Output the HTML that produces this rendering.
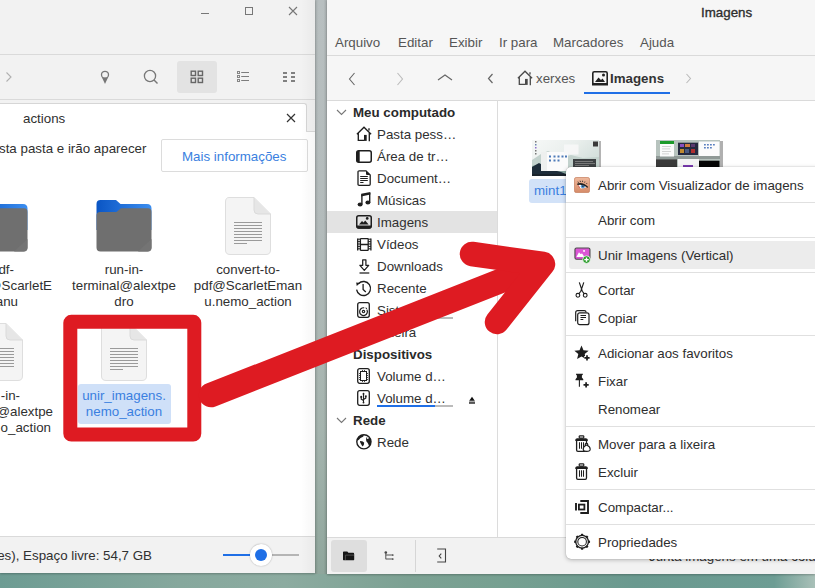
<!DOCTYPE html>
<html><head><meta charset="utf-8">
<style>
*{margin:0;padding:0;box-sizing:border-box}
html,body{width:815px;height:588px;overflow:hidden}
body{position:relative;font-family:"Liberation Sans",sans-serif;font-size:13.33px;color:#303030;
background:linear-gradient(90deg,#6d9c93 0%,#86a89d 22%,#8caba0 35%,#7ca193 50%,#76a091 62%,#6a998f 78%,#6d9d94 95%,#a9c0b8 100%)}
.a{position:absolute}
.t{position:absolute;white-space:nowrap;line-height:16px;padding-top:1px}
#lw{left:0;top:0;width:315px;height:573px;background:#fff;overflow:hidden;box-shadow:0 1px 2px rgba(0,0,0,.25)}
#rw{left:327px;top:0;width:488px;height:574px;background:#fff;overflow:hidden;box-shadow:0 1px 2px rgba(0,0,0,.25)}
#gap{left:315px;top:0;width:12px;height:574px;background:linear-gradient(90deg,rgba(0,0,0,.1),rgba(0,0,0,0) 30%,rgba(0,0,0,0) 70%,rgba(0,0,0,.12)),linear-gradient(180deg,#b8bfc0 0%,#b3bbbb 40%,#a5b4ae 75%,#8fa69c 100%)}
.hdr{background:#f2f2f2}
.line{background:#dadada}
.ctr{text-align:center}
.sel{color:#3a7fe0}
.menu{left:566px;top:167px;width:260px;height:392px;background:#fff;border-radius:5px;
box-shadow:0 1px 4px rgba(0,0,0,.25),0 0 1px rgba(0,0,0,.35)}
.mi{position:absolute;left:32px;white-space:nowrap;line-height:16px;padding-top:1px;color:#2e2e2e}
.sep{position:absolute;left:0;width:260px;height:1px;background:#e0e0e0}
</style></head><body>
<div id="gap" class="a"></div>

<!-- LEFT WINDOW -->
<div id="lw" class="a">
  <div class="a hdr" style="left:0;top:0;width:315px;height:131px"></div>
  <div class="a line" style="left:0;top:54px;width:315px;height:1px"></div>
  <div class="a line" style="left:0;top:99px;width:315px;height:1px"></div>
  <!-- window buttons -->
  <div class="a" style="left:201px;top:13px;width:8px;height:1px;background:#777"></div>
  <div class="a" style="left:245px;top:7px;width:8px;height:8px;border:1px solid #777"></div>
  <svg class="a" style="left:288px;top:6px" width="10" height="10" viewBox="0 0 10 10"><path d="M1 1L9 9M9 1L1 9" stroke="#777" stroke-width="1.1"/></svg>
  <!-- toolbar -->
  <svg class="a" style="left:5px;top:71px" width="8" height="12" viewBox="0 0 8 12"><path d="M1.5 1.5L6 6L1.5 10.5" stroke="#b0b0b0" fill="none" stroke-width="1.1"/></svg>
  <svg class="a" style="left:100px;top:70px" width="10" height="15" viewBox="0 0 10 15"><circle cx="5" cy="4.8" r="3.5" fill="none" stroke="#777" stroke-width="1.3"/><path d="M2 7.5L5 14L8 7.5Z" fill="#777"/></svg>
  <svg class="a" style="left:143px;top:69px" width="16" height="16" viewBox="0 0 16 16"><circle cx="7" cy="7" r="5.6" fill="none" stroke="#777" stroke-width="1.3"/><path d="M11 11L14.5 14.5" stroke="#777" stroke-width="1.4"/></svg>
  <div class="a" style="left:177px;top:61px;width:40px;height:32px;background:#e3e3e3;border-radius:3px"></div>
  <svg class="a" style="left:190px;top:70px" width="14" height="14" viewBox="0 0 14 14"><g fill="none" stroke="#666" stroke-width="1.4"><rect x="1.2" y="1.2" width="4.3" height="4.3"/><rect x="8.2" y="1.2" width="4.3" height="4.3"/><rect x="1.2" y="8.2" width="4.3" height="4.3"/><rect x="8.2" y="8.2" width="4.3" height="4.3"/></g></svg>
  <svg class="a" style="left:237px;top:71px" width="13" height="12" viewBox="0 0 13 12"><g fill="none" stroke="#858585" stroke-width="1"><rect x="0.5" y="0.5" width="2" height="2"/><rect x="0.5" y="4.5" width="2" height="2"/><rect x="0.5" y="8.5" width="2" height="2"/></g><path d="M4.2 1.5H12M4.2 5.5H12M4.2 9.5H12" stroke="#7d7d7d" stroke-width="1.1"/></svg>
  <svg class="a" style="left:283px;top:72px" width="13" height="11" viewBox="0 0 13 11"><g fill="#808080"><rect x="0" y="0" width="4" height="2"/><rect x="8" y="0" width="4" height="2"/><rect x="0" y="4" width="4" height="2"/><rect x="8" y="4" width="4" height="2"/><rect x="0" y="8" width="4" height="2"/><rect x="8" y="8" width="4" height="2"/></g></svg>
  <!-- tab -->
  <div class="a" style="left:-4px;top:103px;width:311px;height:29px;background:#fff;border:1px solid #d6d6d6;border-bottom:none;border-radius:3px 3px 0 0"></div>
  <div class="a line" style="left:306px;top:131px;width:9px;height:1px"></div>
  <div class="t" style="left:23px;top:110px">actions</div>
  <svg class="a" style="left:286px;top:113px" width="10" height="10" viewBox="0 0 10 10"><path d="M1 1L9 9M9 1L1 9" stroke="#333" stroke-width="1.2"/></svg>
  <!-- info bar -->
  <div class="t" style="left:-1px;top:140px">sta pasta e irão aparecer</div>
  <div class="a" style="left:161px;top:139px;width:147px;height:33px;border:1px solid #dcdcdc;border-radius:2px;background:#fff"></div>
  <div class="t sel" style="left:182px;top:148px">Mais informações</div>

  <!-- icons row 1 -->
  <!-- folder col1 -->
  <svg class="a" style="left:-28px;top:200px" width="56" height="53" viewBox="0 0 56 53"><defs><linearGradient id="fg1" x1="0" x2="1"><stop offset="0" stop-color="#0a55c4"/><stop offset="1" stop-color="#3c8ef0"/></linearGradient></defs><path d="M0.5 4Q0.5 0 4.5 0H20L24.5 4H51Q55.5 4 55.5 8.5V30H0.5Z" fill="url(#fg1)"/><path d="M0.5 15.5Q0.5 12 4 12H20.5L25 8.3H52Q55.5 8.3 55.5 12V47.5Q55.5 51.5 51.5 51.5H4.5Q0.5 51.5 0.5 47.5Z" fill="#6f6f6f"/><path d="M55.5 39V47.5Q55.5 51.5 51.5 51.5H42Z" fill="#747474"/></svg>
  <svg class="a" style="left:96px;top:200px" width="56" height="53" viewBox="0 0 56 53"><defs><linearGradient id="fg2" x1="0" x2="1"><stop offset="0" stop-color="#0a55c4"/><stop offset="1" stop-color="#3c8ef0"/></linearGradient></defs><path d="M0.5 4Q0.5 0 4.5 0H20L24.5 4H51Q55.5 4 55.5 8.5V30H0.5Z" fill="url(#fg2)"/><path d="M0.5 15.5Q0.5 12 4 12H20.5L25 8.3H52Q55.5 8.3 55.5 12V47.5Q55.5 51.5 51.5 51.5H4.5Q0.5 51.5 0.5 47.5Z" fill="#6f6f6f"/><path d="M55.5 39V47.5Q55.5 51.5 51.5 51.5H42Z" fill="#747474"/></svg>
  <!-- file col3 -->
  <svg class="a" style="left:225px;top:197px" width="46" height="58" viewBox="0 0 46 58"><path d="M4 0.5H29L45.5 17V53Q45.5 57.5 41 57.5H5Q0.5 57.5 0.5 53V5Q0.5 0.5 4 0.5Z" fill="#f4f4f4" stroke="#dedede"/><path d="M29 0.5V13Q29 17 33 17H45.5" fill="#e6e6e6" stroke="#dadada"/><g stroke="#9a9a9a" stroke-width="1"><path d="M9 25.5H37M9 28.5H37M9 31.5H37M9 34.5H37M9 37.5H37M9 40.5H37M9 43.5H37M9 46.5H22"/></g></svg>

  <div class="t" style="left:-200px;top:261px;width:214px;text-align:right">pdf-</div><div class="t" style="left:-200px;top:277px;width:252px;text-align:right">@ScarletE</div><div class="t" style="left:-200px;top:293px;width:218px;text-align:right">anu</div>
  <div class="t ctr" style="left:64px;top:261px;width:120px">run-in-<br>terminal@alextpe<br>dro</div>
  <div class="t ctr" style="left:188px;top:261px;width:120px">convert-to-<br>pdf@ScarletEman<br>u.nemo_action</div>

  <!-- row 2 -->
  <svg class="a" style="left:-23px;top:323px" width="46" height="58" viewBox="0 0 46 58"><path d="M4 0.5H29L45.5 17V53Q45.5 57.5 41 57.5H5Q0.5 57.5 0.5 53V5Q0.5 0.5 4 0.5Z" fill="#f4f4f4" stroke="#dedede"/><path d="M29 0.5V13Q29 17 33 17H45.5" fill="#e6e6e6" stroke="#dadada"/><g stroke="#9a9a9a" stroke-width="1"><path d="M9 25.5H37M9 28.5H37M9 31.5H37M9 34.5H37M9 37.5H37M9 40.5H37M9 43.5H37M9 46.5H22"/></g></svg>
  <div class="t" style="left:-200px;top:387px;width:220px;text-align:right">-in-</div><div class="t" style="left:-200px;top:403px;width:253px;text-align:right">@alextpe</div><div class="t" style="left:-200px;top:419px;width:251px;text-align:right">o_action</div>
  <svg class="a" style="left:101px;top:323px" width="46" height="58" viewBox="0 0 46 58"><path d="M4 0.5H29L45.5 17V53Q45.5 57.5 41 57.5H5Q0.5 57.5 0.5 53V5Q0.5 0.5 4 0.5Z" fill="#f4f4f4" stroke="#dedede"/><path d="M29 0.5V13Q29 17 33 17H45.5" fill="#e6e6e6" stroke="#dadada"/><g stroke="#9a9a9a" stroke-width="1"><path d="M9 25.5H37M9 28.5H37M9 31.5H37M9 34.5H37M9 37.5H37M9 40.5H37M9 43.5H37M9 46.5H22"/></g></svg>
  <div class="a" style="left:78px;top:384px;width:93px;height:40px;background:#cfe0f8;border-radius:3px"></div>
  <div class="t ctr sel" style="left:64px;top:387px;width:120px">unir_imagens.<br>nemo_action</div>

  <!-- statusbar -->
  <div class="a hdr" style="left:0;top:536px;width:315px;height:37px"></div>
  <div class="a line" style="left:0;top:536px;width:315px;height:1px"></div>
  <div class="t" style="left:-200px;top:547px;width:352px;text-align:right">bytes), Espaço livre: 54,7 GB</div>
  <div class="a" style="left:223px;top:554px;width:30px;height:2px;background:#1f6fe6"></div>
  <div class="a" style="left:268px;top:554px;width:31px;height:2px;background:#b5b5b5"></div>
  <div class="a" style="left:250px;top:544px;width:22px;height:22px;border-radius:50%;background:#fff;box-shadow:0 0 1.5px rgba(0,0,0,.35)"></div>
  <div class="a" style="left:255px;top:549px;width:12px;height:12px;border-radius:50%;background:#1f6fe6"></div>
  <div class="a" style="left:301px;top:0;width:14px;height:573px;background:linear-gradient(90deg,rgba(0,0,0,0),rgba(0,0,0,.035))"></div>
</div>

<!-- RIGHT WINDOW -->
<div id="rw" class="a">
  <div class="a" style="left:0;top:0;width:488px;height:100px;background:#f6f6f6"></div>
  <div class="t" style="left:374px;top:4px;color:#2e2e2e;-webkit-text-stroke:0.35px #2e2e2e">Imagens</div>
  <div class="t" style="left:8px;top:34px;color:#555">Arquivo</div>
  <div class="t" style="left:71px;top:34px;color:#555">Editar</div>
  <div class="t" style="left:122px;top:34px;color:#555">Exibir</div>
  <div class="t" style="left:172px;top:34px;color:#555">Ir para</div>
  <div class="t" style="left:226px;top:34px;color:#555">Marcadores</div>
  <div class="t" style="left:313px;top:34px;color:#555">Ajuda</div>
  <div class="a line" style="left:0;top:55px;width:488px;height:1px"></div>
  <div class="a line" style="left:0;top:100px;width:488px;height:1px"></div>
  <!-- nav -->
  <svg class="a" style="left:21px;top:72px" width="8" height="14" viewBox="0 0 8 14"><path d="M6.5 1L1.5 7L6.5 13" stroke="#666" fill="none" stroke-width="1.1"/></svg>
  <svg class="a" style="left:69px;top:72px" width="8" height="14" viewBox="0 0 8 14"><path d="M1.5 1L6.5 7L1.5 13" stroke="#bbb" fill="none" stroke-width="1.1"/></svg>
  <svg class="a" style="left:110px;top:74px" width="16" height="7" viewBox="0 0 16 7"><path d="M1 6L8 1L15 6" stroke="#666" fill="none" stroke-width="1.2"/></svg>
  <svg class="a" style="left:160px;top:73px" width="7" height="11" viewBox="0 0 7 11"><path d="M5.5 1L1.5 5.5L5.5 10" stroke="#666" fill="none" stroke-width="1.2"/></svg>
  <svg class="a" style="left:190px;top:70px" width="17" height="16" viewBox="0 0 17 16"><path d="M0.9 8.3L8 1.2L15.1 8.3M2.3 6.8V14.3H8.2M13.3 6.8V15.2M13 2.2V4.6" fill="none" stroke="#4a4a4a" stroke-width="1.3"/><rect x="8" y="8.9" width="2.7" height="6" fill="#4a4a4a"/></svg>
  <div class="t" style="left:209px;top:70px;color:#555">xerxes</div>
  <svg class="a" style="left:265px;top:71px" width="16" height="15" viewBox="0 0 16 15"><rect x="0.8" y="0.8" width="14.4" height="12.4" rx="1.5" fill="none" stroke="#222" stroke-width="1.6"/><path d="M3 11L6.5 6.5L9 9L10.5 7.5L13 11Z" fill="#222"/><circle cx="11.5" cy="4" r="1.5" fill="#222"/><rect x="0" y="12" width="16" height="2.5" fill="#222"/></svg>
  <div class="t" style="left:283px;top:70px;font-weight:bold;color:#333">Imagens</div>
  <div class="a" style="left:257px;top:92px;width:86px;height:2px;background:#1f6fe6"></div>
  <svg class="a" style="left:358px;top:73px" width="7" height="11" viewBox="0 0 7 11"><path d="M1.5 1L5.5 5.5L1.5 10" stroke="#bbb" fill="none" stroke-width="1.1"/></svg>

  <!-- sidebar -->
  <div class="a" style="left:170px;top:100px;width:1px;height:437px;background:#dcdcdc"></div>
  <div class="a" style="left:0;top:211px;width:170px;height:22px;background:#e3e3e3"></div>
  <svg class="a" style="left:9px;top:109px" width="11" height="7" viewBox="0 0 11 7"><path d="M1 1L5.5 5.5L10 1" stroke="#777" fill="none" stroke-width="1.1"/></svg>
  <div class="t" style="left:26px;top:104px;font-weight:bold;color:#2a2a2a">Meu computado</div>
  <div class="t" style="left:50px;top:126px">Pasta pess…</div>
  <div class="t" style="left:50px;top:148px">Área de tr…</div>
  <div class="t" style="left:50px;top:170px">Document…</div>
  <div class="t" style="left:50px;top:192px">Músicas</div>
  <div class="t" style="left:50px;top:214px">Imagens</div>
  <div class="t" style="left:50px;top:236px">Vídeos</div>
  <div class="t" style="left:50px;top:258px">Downloads</div>
  <div class="t" style="left:50px;top:280px">Recente</div>
  <div class="t" style="left:50px;top:302px">Sistema d…</div>
  <div class="a" style="left:50px;top:317px;width:76px;height:2px;background:#bbb"></div>
  <div class="t" style="left:50px;top:324px">Lixeira</div>
  <div class="t" style="left:26px;top:346px;font-weight:bold;color:#2a2a2a">Dispositivos</div>
  <div class="t" style="left:50px;top:368px">Volume d…</div>
  <div class="t" style="left:50px;top:390px">Volume d…</div>
  <div class="a" style="left:50px;top:405px;width:76px;height:2px;background:#bbb"></div>
  <div class="a" style="left:50px;top:405px;width:58px;height:2px;background:#1f6fe6"></div>
  <svg class="a" style="left:142px;top:396px" width="6" height="8" viewBox="0 0 6 8"><path d="M3 0.8L5.8 4.7H0.2Z" fill="#111"/><rect x="0" y="5.5" width="6" height="2.4" fill="#555"/></svg>
  <svg class="a" style="left:9px;top:417px" width="11" height="7" viewBox="0 0 11 7"><path d="M1 1L5.5 5.5L10 1" stroke="#777" fill="none" stroke-width="1.1"/></svg>
  <div class="t" style="left:26px;top:412px;font-weight:bold;color:#2a2a2a">Rede</div>
  <div class="t" style="left:50px;top:434px">Rede</div>

  <!-- sidebar icons -->
  <svg class="a" style="left:29px;top:126px" width="17" height="16" viewBox="0 0 17 16"><path d="M0.9 8.3L8 1.2L15.1 8.3M2.3 6.8V14.3H8.2M13.3 6.8V15.2M13 2.2V4.6" fill="none" stroke="#1e1e1e" stroke-width="1.35"/><rect x="8" y="8.9" width="2.7" height="6" fill="#1e1e1e"/></svg>
  <svg class="a" style="left:29px;top:150px" width="16" height="13" viewBox="0 0 16 13"><rect x="0.75" y="0.75" width="14.5" height="11.5" rx="2" fill="none" stroke="#1e1e1e" stroke-width="1.5"/><path d="M0.7 2.7Q0.7 0.7 2.7 0.7H3.7V12.3H2.7Q0.7 12.3 0.7 10.3Z" fill="#1e1e1e"/></svg>
  <svg class="a" style="left:30px;top:170px" width="14" height="16" viewBox="0 0 14 16"><path d="M1 2Q1 0.8 2.2 0.8H9L13.2 5V14.3Q13.2 15.3 12.2 15.3H2.2Q1 15.3 1 14.3Z" fill="none" stroke="#1e1e1e" stroke-width="1.3"/><path d="M9 0.8L13.2 5H10Q9 5 9 4Z" fill="#1e1e1e"/><path d="M3.2 6.5H10.8M3.2 8.5H10.8M3.2 10.5H10.8M3.2 12.5H6.5" stroke="#1e1e1e" stroke-width="1"/></svg>
  <svg class="a" style="left:30px;top:192px" width="14" height="15" viewBox="0 0 14 15"><path d="M4.2 1.8L13.4 0V2.6L4.2 4.4Z" fill="#1e1e1e"/><path d="M4.9 2.5V12.3M12.7 1V10.6" stroke="#1e1e1e" stroke-width="1.4"/><ellipse cx="3.1" cy="12.4" rx="2.5" ry="2" fill="#1e1e1e"/><ellipse cx="10.9" cy="10.6" rx="2.5" ry="2" fill="#1e1e1e"/></svg>
  <svg class="a" style="left:29px;top:215px" width="16" height="14" viewBox="0 0 16 14"><rect x="0.75" y="0.75" width="14.5" height="12.3" rx="2" fill="none" stroke="#1e1e1e" stroke-width="1.5"/><path d="M0.5 10.4H15.5V11.6Q15.5 13.8 13.3 13.8H2.7Q0.5 13.8 0.5 11.6Z" fill="#1e1e1e"/><path d="M3 9.6L6 6L7.6 7.6L9.2 5.4L12.6 9.6Z" fill="#1e1e1e"/><circle cx="11.2" cy="3.4" r="1.35" fill="#1e1e1e"/></svg>
  <svg class="a" style="left:30px;top:238px" width="15" height="13" viewBox="0 0 15 13"><path d="M0.7 0.6V12.4M3.4 0.6V12.4M11.2 0.6V12.4M13.9 0.6V12.4M3.4 0.7H11.2M3.4 6.5H11.2M3.4 12.3H11.2" stroke="#1e1e1e" stroke-width="1.3" fill="none"/><path d="M0.7 1.2H3.4M0.7 3.6H3.4M0.7 6H3.4M0.7 8.4H3.4M0.7 10.8H3.4M11.2 1.2H13.9M11.2 3.6H13.9M11.2 6H13.9M11.2 8.4H13.9M11.2 10.8H13.9" stroke="#1e1e1e" stroke-width="1"/></svg>
  <svg class="a" style="left:32px;top:259px" width="11" height="15" viewBox="0 0 11 15"><path d="M3.7 0.8H6.9V6.3H9.7L5.3 11.3L0.9 6.3H3.7Z" fill="none" stroke="#1e1e1e" stroke-width="1.25" stroke-linejoin="round"/><path d="M0.5 14H10.3" stroke="#1e1e1e" stroke-width="1.25"/></svg>
  <svg class="a" style="left:28px;top:280px" width="17" height="17" viewBox="0 0 17 17"><path d="M3.6 3.5A7 7 0 1 1 1.6 9.6" fill="none" stroke="#1e1e1e" stroke-width="1.35"/><path d="M1.2 2.4L5.2 3.1L1.7 6.1Z" fill="#1e1e1e"/><path d="M8.1 4V9.4L10.8 12" fill="none" stroke="#1e1e1e" stroke-width="1.3"/></svg>
  <svg class="a" style="left:30px;top:302px" width="13" height="16" viewBox="0 0 13 16"><rect x="0.7" y="0.7" width="11.6" height="14.6" rx="2" fill="none" stroke="#1e1e1e" stroke-width="1.3"/><path d="M9.9 7.7A3.9 3.9 0 1 1 7.2 5.8" fill="none" stroke="#1e1e1e" stroke-width="1.2"/><path d="M8.3 5.4L10.2 6L9.3 7.6Z" fill="#1e1e1e"/><circle cx="6.5" cy="9.6" r="1.2" fill="none" stroke="#1e1e1e" stroke-width="1.1"/></svg>
  <svg class="a" style="left:30px;top:368px" width="13" height="16" viewBox="0 0 13 16"><rect x="0.7" y="0.7" width="11.6" height="14.6" rx="2" fill="none" stroke="#1e1e1e" stroke-width="1.3"/><rect x="3.5" y="3.5" width="6" height="9" fill="none" stroke="#1e1e1e" stroke-width="1"/><path d="M2.2 5.5H3M2.2 7.5H3M2.2 9.5H3M2.2 11.5H3M10 5.5H10.8M10 7.5H10.8M10 9.5H10.8M10 11.5H10.8M5.5 2.2V3M7.5 2.2V3M5.5 13V13.8M7.5 13V13.8" stroke="#1e1e1e" stroke-width="1"/></svg>
  <svg class="a" style="left:30px;top:390px" width="13" height="16" viewBox="0 0 13 16"><rect x="0.7" y="0.7" width="11.6" height="14.6" rx="2" fill="none" stroke="#1e1e1e" stroke-width="1.3"/><path d="M6.5 3.8V12.8M6.5 10.4L4.2 9.1V7.3M6.5 9.4L8.8 8.1V6.8" fill="none" stroke="#1e1e1e" stroke-width="1.1"/><path d="M5.1 4.3L6.5 2.4L7.9 4.3Z" fill="#1e1e1e"/><circle cx="4.2" cy="6.9" r="1.05" fill="#1e1e1e"/><rect x="7.9" y="5.4" width="1.8" height="1.8" fill="#1e1e1e"/><circle cx="6.5" cy="12.6" r="0.9" fill="#1e1e1e"/></svg>
  <svg class="a" style="left:29px;top:433px" width="16" height="17" viewBox="0 0 16 17"><circle cx="7.9" cy="8.8" r="7.1" fill="none" stroke="#1e1e1e" stroke-width="1.4"/><path d="M1.1 6.6A7.1 7.1 0 0 1 7.6 1.7L7.5 3.2Q6.8 4 5.5 4.6Q4 5.3 3.4 6.3Q2.6 7.2 1.6 7.6Z" fill="#1e1e1e"/><path d="M4 8Q7.2 7.8 8.2 9.8Q8.3 11.9 6.6 13.6Q5.5 12.3 5.1 10.9Q4 9.9 4 8Z" fill="#1e1e1e"/><path d="M10.4 4.5L12.5 3.4A7.1 7.1 0 0 1 14.9 10.4Q14 12 13 12.8Q12.4 11.2 12 10.4Q11.2 9 10.3 8.2Q9.8 6.2 10.4 4.5Z" fill="#1e1e1e"/><circle cx="11.8" cy="5" r="0.9" fill="#fff"/></svg>
  <!-- content -->
  <svg class="a" style="left:204px;top:139px;filter:blur(0.35px)" width="70" height="40" viewBox="0 0 70 40">
    <defs><linearGradient id="sky" x1="0" y1="0" x2="1" y2="0.6"><stop offset="0" stop-color="#f6f8f7"/><stop offset="0.5" stop-color="#eaefed"/><stop offset="1" stop-color="#d0ddd9"/></linearGradient></defs>
    <rect x="68" y="2" width="3" height="36" fill="#6a6a6a" opacity="0.5"/>
    <rect x="1" y="1" width="67" height="36" fill="url(#sky)"/>
    <path d="M1 21L10 15L17 12L24 15L32 18L40 16L52 19L68 18V37H1Z" fill="#c3d2cd"/>
    <path d="M1 27L12 24L24 28L38 31L55 29L68 28V37H1Z" fill="#8eaaa3"/>
    <path d="M1 28L8 24L18 30L30 33L40 37H1Z" fill="#1e2d3a"/>
    <rect x="1" y="35" width="67" height="2" fill="#1a232b"/>
    <rect x="10" y="13" width="27" height="19" fill="#fbfbfb"/>
    <rect x="10" y="13" width="6" height="19" fill="#eef0ef"/>
    <g fill="#4d7ab8"><rect x="18" y="16.5" width="2" height="2"/><rect x="22.5" y="16.5" width="2" height="2"/><rect x="26.5" y="16.5" width="2" height="2"/><rect x="30.5" y="16.5" width="2" height="2"/><rect x="34" y="16.5" width="2" height="2"/><rect x="18" y="20.5" width="2" height="2"/><rect x="22.5" y="20.5" width="2" height="2"/><rect x="26.5" y="20.5" width="2" height="2"/></g>
    <rect x="33" y="5.5" width="14.5" height="10" fill="#f7f7f7" opacity="0.9"/>
    <rect x="42" y="20" width="23" height="8.5" fill="#3e4244"/>
    <g fill="#888"><rect x="44" y="22" width="18" height="0.8"/><rect x="44" y="24" width="20" height="0.8"/><rect x="44" y="26" width="14" height="0.8"/></g>
    <rect x="62" y="2.5" width="5" height="5" fill="#3a3a3a"/>
    <g fill="#777"><rect x="4" y="2" width="1.5" height="1.5"/><rect x="4" y="5" width="1.5" height="1.5" fill="#6a84b0"/><rect x="4" y="8" width="1.5" height="1.5" fill="#9070d0"/><rect x="4" y="11" width="1.5" height="1.5"/><rect x="4" y="14" width="1.5" height="1.5"/></g>
  </svg>
  <svg class="a" style="left:329px;top:140px;filter:blur(0.35px)" width="68" height="28" viewBox="0 0 68 28">
    <rect x="64" y="1" width="3" height="27" fill="#707070" opacity="0.55"/>
    <rect x="0" y="0" width="64" height="28" fill="#b7c3be"/>
    <rect x="0" y="16" width="64" height="3" fill="#8f9996"/>
    <rect x="4" y="1" width="14" height="15.5" fill="#fafafa"/>
    <rect x="4" y="1" width="14" height="3" fill="#1c9a2a"/>
    <g fill="#c9c9c9"><rect x="6" y="6" width="9" height="0.8"/><rect x="6" y="8.5" width="8" height="0.8"/><rect x="6" y="11" width="9" height="0.8"/><rect x="6" y="13.5" width="7" height="0.8"/></g>
    <rect x="22" y="2.7" width="20" height="12.3" fill="#262a40"/>
    <rect x="24" y="4" width="4" height="3" fill="#8a4ec0"/><rect x="29" y="4" width="5" height="3" fill="#d07a40"/><rect x="35" y="4" width="4" height="3" fill="#5a3a70"/>
    <rect x="24" y="9" width="4" height="4" fill="#c08a30"/><rect x="29" y="9" width="4" height="4" fill="#4a5a80"/><rect x="35" y="9" width="4" height="4" fill="#b03030"/>
    <rect x="43" y="1.5" width="20.5" height="14.5" fill="#fbfbfb"/>
    <g fill="#5a80c0"><rect x="48" y="4" width="1.8" height="1.5"/><rect x="51" y="4" width="1.8" height="1.5"/><rect x="54" y="4" width="1.8" height="1.5"/><rect x="57" y="4" width="1.8" height="1.5"/><rect x="48" y="7" width="1.8" height="1.5"/><rect x="51" y="7" width="1.8" height="1.5"/><rect x="54" y="7" width="1.8" height="1.5"/></g>
    <rect x="0" y="19.3" width="21" height="9" fill="#3a3a3a"/>
    <rect x="22" y="19" width="21" height="9" fill="#f4f4f4"/>
    <rect x="27" y="25" width="10" height="3" fill="#7a3ab0"/>
    <rect x="43" y="20.7" width="20.5" height="8" fill="#050505"/>
  </svg>
  <div class="a" style="left:202px;top:179px;width:50px;height:24px;background:#d2e2f8;border-radius:3px"></div>
  <div class="t sel" style="left:207px;top:182px">mint1</div>

  <!-- statusbar -->
  <div class="a" style="left:0;top:537px;width:488px;height:37px;background:#f2f2f2"></div>
  <div class="a line" style="left:0;top:537px;width:488px;height:1px"></div>
  <div class="a" style="left:4px;top:540px;width:36px;height:32px;background:#dedede;border-radius:3px"></div>
  <svg class="a" style="left:16px;top:551px" width="12" height="10" viewBox="0 0 12 10"><path d="M0 1.3Q0 0.5 0.8 0.5H4.3L5.4 1.7H10.4Q11 1.7 11 2.3V3H0Z" fill="#161616"/><rect x="0" y="2.4" width="11.2" height="6.8" rx="0.6" fill="#161616"/><path d="M2.4 9V4.1H11" fill="none" stroke="#5c5c5c" stroke-width="0.8"/></svg>
  <svg class="a" style="left:57px;top:551px" width="10" height="10" viewBox="0 0 10 10"><circle cx="1.8" cy="1.5" r="1.3" fill="#444"/><path d="M1.8 1.5V8.2M1.8 4H8.6M1.8 8H8.6" fill="none" stroke="#555" stroke-width="1"/><circle cx="8.8" cy="4" r="0.85" fill="#444"/><circle cx="8.8" cy="8" r="0.85" fill="#444"/></svg>
  <div class="a" style="left:88px;top:540px;width:1px;height:32px;background:#d6d6d6"></div>
  <svg class="a" style="left:110px;top:548px" width="10" height="15" viewBox="0 0 10 15"><path d="M0.2 1H8.5V14H0.2" fill="none" stroke="#444" stroke-width="1.1"/><path d="M4.3 5.6L2.2 8L4.3 10.4" fill="none" stroke="#444" stroke-width="1.1"/></svg>
  <div class="t" style="left:322px;top:548px;color:#333">Junta imagens em uma coluna</div>
</div>

<!-- ARROW -->
<svg class="a" style="left:0;top:0" width="815" height="588" viewBox="0 0 815 588">
  <rect x="70.3" y="321.8" width="124" height="112.8" rx="1" fill="none" stroke="#de1b22" stroke-width="14"/>
  <g stroke="#de1b22" stroke-width="24.5" stroke-linecap="round" stroke-linejoin="round" fill="none">
    <path d="M211 395L541 265"/>
    <path d="M472 254L543 264L497 322"/>
  </g>
</svg>

<!-- CONTEXT MENU -->
<div class="a menu">
  <div class="sep" style="top:35px"></div>
  <div class="sep" style="top:70px"></div>
  <div class="sep" style="top:105px"></div>
  <div class="sep" style="top:168px"></div>
  <div class="sep" style="top:259px"></div>
  <div class="sep" style="top:322px"></div>
  <div class="sep" style="top:357px"></div>
  <div class="a" style="left:3px;top:74px;width:257px;height:28px;background:#ececec;border-radius:3px"></div>
  
  <svg class="a" style="left:8px;top:10px" width="16" height="16" viewBox="0 0 16 16"><defs><linearGradient id="eyeg" x1="0" y1="0" x2="0" y2="1"><stop offset="0" stop-color="#eeb89c"/><stop offset="1" stop-color="#d68b68"/></linearGradient></defs><rect x="0.5" y="0.5" width="15" height="15" rx="1.6" fill="url(#eyeg)" stroke="#c47d5c" stroke-width="0.7"/><path d="M4 7.6Q8.5 6.4 12.8 9.8Q10 11.8 6.5 11.3Q4.8 9.9 4 7.6Z" fill="#fff"/><circle cx="8.9" cy="9.3" r="2.1" fill="#5796d2"/><circle cx="8.9" cy="9.2" r="0.8" fill="#1d2b3a"/><path d="M3 6.7Q8.6 4.5 14.3 10L13.5 10.7Q8.6 6.6 3.5 8Z" fill="#222"/><path d="M4.6 5.9L3.9 4.6M6.6 5.1L6.1 3.7M8.6 5L8.5 3.7M10.6 5.7L10.9 4.5M12.4 6.9L13.1 6" stroke="#333" stroke-width="0.85"/><path d="M4.3 8.3L5.6 10.8" stroke="#c9554f" stroke-width="0.9"/></svg>
  <svg class="a" style="left:8px;top:80px" width="17" height="17" viewBox="0 0 17 17"><rect x="0.95" y="0.95" width="15" height="11.3" rx="1.6" fill="#dc56d6" stroke="#4b4b4b" stroke-width="1.1"/><path d="M2.4 9.9L5 5.3L6.4 6.9L8.1 6.4L10.4 9.9Z" fill="#fff"/><rect x="9.2" y="3.1" width="1.7" height="1.7" fill="#fff"/><circle cx="12.5" cy="12.6" r="3.8" fill="#2b9c2b" stroke="#fff" stroke-width="0.7"/><path d="M10.3 12.6H14.7M12.5 10.4V14.8" stroke="#fff" stroke-width="1.4"/></svg>
  <svg class="a" style="left:9px;top:115px" width="13" height="16" viewBox="0 0 13 16"><path d="M4.3 0.4L7.3 9.3L9.2 11.7M8.8 0.4L5.8 9.3L3.9 11.7" fill="none" stroke="#1e1e1e" stroke-width="1.15"/><circle cx="2.9" cy="13.3" r="1.9" fill="none" stroke="#1e1e1e" stroke-width="1.1"/><circle cx="10.2" cy="13.3" r="1.9" fill="none" stroke="#1e1e1e" stroke-width="1.1"/></svg>
  <svg class="a" style="left:9px;top:143px" width="15" height="16" viewBox="0 0 15 16"><path d="M0.7 11.2V2.6Q0.7 0.7 2.6 0.7H9.3Q11 0.7 11.1 2.3" fill="none" stroke="#1e1e1e" stroke-width="1.2"/><rect x="2.7" y="2.9" width="11.3" height="11.8" rx="2" fill="#fff" stroke="#1e1e1e" stroke-width="1.2"/><path d="M5.5 5.5H11M5.5 7.5H11M5.5 9.5H8.3" stroke="#1e1e1e" stroke-width="1"/></svg>
  <svg class="a" style="left:8px;top:178px" width="17" height="17" viewBox="0 0 17 17"><path d="M7.5 0.5L9.5 5.3L14.6 5.7L10.7 9.1L11.9 14.1L7.5 11.4L3.1 14.1L4.3 9.1L0.4 5.7L5.5 5.3Z" fill="#1e1e1e"/><path d="M10.2 12.9H15.8M13 10.1V15.7" stroke="#fff" stroke-width="3.6"/><path d="M10.4 12.9H15.6M13 10.3V15.5" stroke="#1e1e1e" stroke-width="1.7"/></svg>
  <svg class="a" style="left:9px;top:206px" width="16" height="16" viewBox="0 0 16 16"><path d="M1 0.8H7.9V1.6L6.9 2.5V4.6L8.3 6.2V7.3H0.5V6.2L1.9 4.6V2.5L1 1.6Z" fill="#1e1e1e"/><path d="M4.4 7V13.8" stroke="#1e1e1e" stroke-width="1.1"/><path d="M8.5 11.8H13.7M11.1 9.2V14.4" stroke="#1e1e1e" stroke-width="1.7"/></svg>
  <svg class="a" style="left:9px;top:268px" width="16" height="17" viewBox="0 0 16 17"><rect x="4.2" y="0.8" width="4.6" height="2.3" rx="0.8" fill="none" stroke="#1e1e1e" stroke-width="1.2"/><path d="M0.3 5.9V4.8Q0.5 3.2 2.2 3.2H10.9Q12.6 3.2 12.8 4.8V5.9Z" fill="#1e1e1e"/><path d="M1.6 6V15Q1.6 16.3 2.9 16.3H10.2Q11.5 16.3 11.5 15V6" fill="none" stroke="#1e1e1e" stroke-width="1.3"/><path d="M4.5 7.3V13.8M6.5 7.3V13.8M8.5 7.3V13.8" stroke="#1e1e1e" stroke-width="1.05"/><path d="M11 10.2Q9.6 9.6 10.6 8.6H12.4Q13.4 9.6 12 10.2Q15.2 11.4 15.2 14.3Q15.2 16.4 11.6 16.4Q8.2 16.4 8.2 14.3Q8.2 11.4 11 10.2Z" fill="#fff" stroke="#1e1e1e" stroke-width="1.1"/></svg>
  <svg class="a" style="left:9px;top:296px" width="14" height="17" viewBox="0 0 14 17"><rect x="4.2" y="0.8" width="4.6" height="2.3" rx="0.8" fill="none" stroke="#1e1e1e" stroke-width="1.2"/><path d="M0.3 5.9V4.8Q0.5 3.2 2.2 3.2H10.9Q12.6 3.2 12.8 4.8V5.9Z" fill="#1e1e1e"/><path d="M1.6 6V15Q1.6 16.3 2.9 16.3H10.2Q11.5 16.3 11.5 15V6" fill="none" stroke="#1e1e1e" stroke-width="1.3"/><path d="M4.5 7.3V13.8M6.5 7.3V13.8M8.5 7.3V13.8" stroke="#1e1e1e" stroke-width="1.05"/></svg>
  <svg class="a" style="left:9px;top:333px" width="14" height="14" viewBox="0 0 14 14"><path d="M5.3 1H13V13H5.3" fill="none" stroke="#1e1e1e" stroke-width="1.9"/><path d="M1 3V10.6" stroke="#1e1e1e" stroke-width="1.9"/><rect x="3.9" y="4.6" width="5.5" height="4.9" fill="none" stroke="#1e1e1e" stroke-width="1.8"/></svg>
  <svg class="a" style="left:7px;top:366px" width="18" height="18" viewBox="-1 -1 18 18"><circle cx="8.1" cy="7.7" r="6.35" fill="none" stroke="#1e1e1e" stroke-width="1.35"/><rect x="6.90" y="-0.25" width="2.4" height="1.9" rx="0.6" transform="rotate(0.0 8.10 0.70)" fill="#1e1e1e"/><rect x="11.85" y="1.80" width="2.4" height="1.9" rx="0.6" transform="rotate(45.0 13.05 2.75)" fill="#1e1e1e"/><rect x="13.90" y="6.75" width="2.4" height="1.9" rx="0.6" transform="rotate(90.0 15.10 7.70)" fill="#1e1e1e"/><rect x="11.85" y="11.70" width="2.4" height="1.9" rx="0.6" transform="rotate(135.0 13.05 12.65)" fill="#1e1e1e"/><rect x="6.90" y="13.75" width="2.4" height="1.9" rx="0.6" transform="rotate(180.0 8.10 14.70)" fill="#1e1e1e"/><rect x="1.95" y="11.70" width="2.4" height="1.9" rx="0.6" transform="rotate(225.0 3.15 12.65)" fill="#1e1e1e"/><rect x="-0.10" y="6.75" width="2.4" height="1.9" rx="0.6" transform="rotate(270.0 1.10 7.70)" fill="#1e1e1e"/><rect x="1.95" y="1.80" width="2.4" height="1.9" rx="0.6" transform="rotate(315.0 3.15 2.75)" fill="#1e1e1e"/><circle cx="8.1" cy="7.7" r="4.3" fill="none" stroke="#1e1e1e" stroke-width="1.05"/></svg>
  <div class="mi" style="top:10px">Abrir com Visualizador de imagens</div>
  <div class="mi" style="top:45px">Abrir com</div>
  <div class="mi" style="top:80px">Unir Imagens (Vertical)</div>
  <div class="mi" style="top:115px">Cortar</div>
  <div class="mi" style="top:143px">Copiar</div>
  <div class="mi" style="top:178px">Adicionar aos favoritos</div>
  <div class="mi" style="top:206px">Fixar</div>
  <div class="mi" style="top:234px">Renomear</div>
  <div class="mi" style="top:269px">Mover para a lixeira</div>
  <div class="mi" style="top:297px">Excluir</div>
  <div class="mi" style="top:332px">Compactar...</div>
  <div class="mi" style="top:367px">Propriedades</div>
</div>
</body></html>
